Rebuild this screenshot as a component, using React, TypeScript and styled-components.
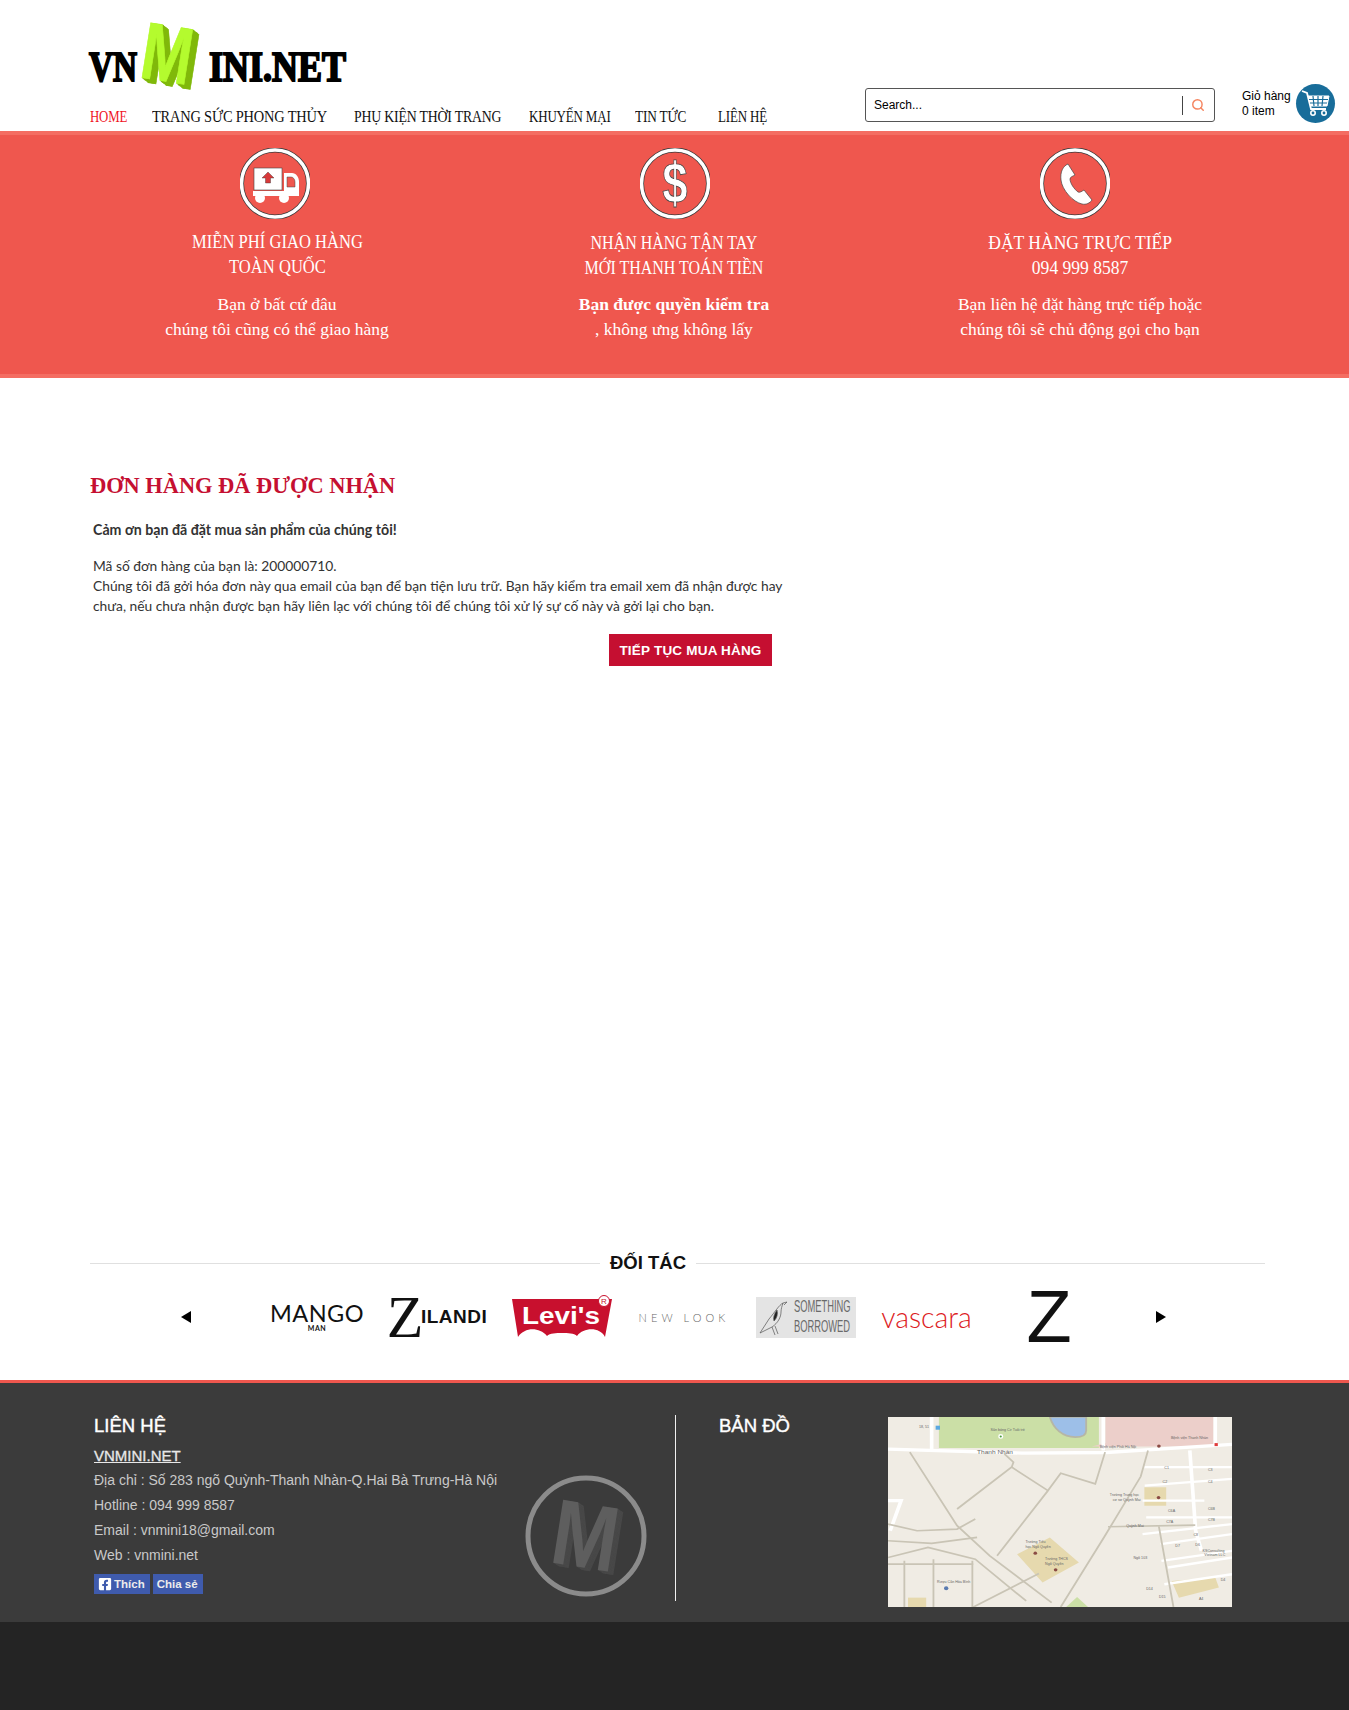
import React from 'react';
import styled, { createGlobalStyle } from 'styled-components';
import { Search } from 'lucide-react';
import { FaFacebookSquare } from 'react-icons/fa';

const GlobalStyle = createGlobalStyle`
  html, body {
    margin: 0;
    padding: 0;
    background: #fff;
    font-family: "Liberation Sans", Arial, sans-serif;
  }
  * {
    box-sizing: border-box;
  }
`;

const Page = styled.div`
  width: 1349px;
  height: 1710px;
  overflow: hidden;
`;

const Header = styled.header`
  height: 131px;
  display: flex;
  justify-content: space-between;
  align-items: flex-end;
  padding: 0 14px 8px 88px;
`;

const Brand = styled.div`
  display: flex;
  flex-direction: column;
`;

const Logo = styled.svg`
  display: block;
  width: 260px;
  height: 70px;
  overflow: visible;
`;

const Nav = styled.nav`
  display: flex;
  margin: 14px 0 -4px 2px;
  height: 20px;
  align-items: center;
`;

const NavLink = styled.a<{ $active?: boolean; $width: number; $squeeze: number }>`
  width: ${(p) => p.$width}px;
  flex: none;
  white-space: nowrap;
  font-family: "Liberation Serif", serif;
  font-size: 16px;
  letter-spacing: -0.2px;
  color: ${(p) => (p.$active ? '#f0141e' : '#111')};
  transform: scaleX(${(p) => p.$squeeze});
  transform-origin: left center;
  cursor: pointer;
`;

const HeaderRight = styled.div`
  display: flex;
  align-items: flex-end;
`;

const SearchBox = styled.div`
  width: 350px;
  height: 34px;
  margin-bottom: 1px;
  display: flex;
  align-items: center;
  border: 1px solid #555;
  border-radius: 3px;
  padding: 0 9px 0 8px;
  background: #fff;
`;

const SearchInput = styled.input`
  flex: 1;
  border: 0;
  outline: 0;
  padding: 0;
  font-family: "Liberation Sans", Arial, sans-serif;
  font-size: 12px;
  color: #000;
  &::placeholder {
    color: #000;
    opacity: 1;
  }
`;

const SearchButton = styled.div`
  height: 19px;
  width: 23px;
  display: flex;
  align-items: center;
  justify-content: flex-end;
  color: #f58560;
  border-left: 1px solid #444;
`;

const Cart = styled.div`
  display: flex;
  align-items: center;
  margin-left: 27px;
  gap: 5px;
`;

const CartText = styled.div`
  width: 49px;
  font-size: 12px;
  line-height: 15px;
  color: #000;
  white-space: nowrap;
`;

const CartBadge = styled.div`
  width: 39px;
  height: 39px;
  border-radius: 50%;
  background: #186d9a;
  display: flex;
  align-items: center;
  justify-content: center;
`;

const Banner = styled.section`
  height: 247px;
  background: #ef574e;
  border-top: 4px solid #f46d62;
  border-bottom: 4px solid #f46d62;
  padding: 13px 0 0 79px;
  display: grid;
  grid-template-columns: 396px 398px 414px;
  color: #fff;
  font-family: "Liberation Serif", serif;
  text-align: center;
`;

const Perk = styled.div`
  display: flex;
  flex-direction: column;
  align-items: center;
`;

const PerkIcon = styled.svg<{ $shift: number }>`
  display: block;
  width: 70px;
  height: 71px;
  margin-left: ${(p) => p.$shift}px;
`;

const PerkTitle = styled.div<{ $drop?: boolean; $squeeze: number }>`
  margin-top: ${(p) => (p.$drop ? 11 : 10)}px;
  font-size: 19.5px;
  line-height: 25px;
  white-space: nowrap;
  transform: scaleX(${(p) => p.$squeeze});
`;

const PerkText = styled.div<{ $drop?: boolean }>`
  margin-top: ${(p) => (p.$drop ? 12 : 13)}px;
  font-size: 17.5px;
  line-height: 25px;
  white-space: nowrap;
`;

const Main = styled.main`
  height: 874px;
  padding: 96px 0 0 90px;
`;

const OrderTitle = styled.h2`
  margin: 0;
  font-family: "Liberation Serif", serif;
  font-weight: 700;
  font-size: 22.4px;
  line-height: 24px;
  color: #c50f31;
`;

const OrderBody = styled.div`
  width: 692px;
  margin-left: 3px;
  font-family: Lato, sans-serif;
  color: #333;
`;

const Thanks = styled.p`
  margin: 22px 0 0;
  font-size: 14.2px;
  line-height: 20px;
  font-weight: 700;
`;

const Message = styled.p`
  margin: 16px 0 0;
  font-size: 13.8px;
  line-height: 20px;
  white-space: nowrap;
`;

const ContinueRow = styled.div`
  display: flex;
  justify-content: flex-end;
  width: 679px;
  margin-top: 18px;
`;

const ContinueButton = styled.button`
  width: 163px;
  height: 32px;
  border: 0;
  padding: 0;
  background: #c50f31;
  color: #fff;
  font-family: "Liberation Sans", Arial, sans-serif;
  font-weight: 700;
  font-size: 13.5px;
  letter-spacing: 0.2px;
`;

const Partners = styled.section`
  height: 128px;
`;

const PartnerHeading = styled.div`
  display: flex;
  align-items: center;
  width: 1175px;
  margin: 0 0 0 90px;
  height: 22px;
  gap: 10px;
`;

const HeadingRule = styled.div<{ $grow?: boolean }>`
  height: 1px;
  background: #e0e0e0;
  flex: ${(p) => (p.$grow ? 1 : 'none')};
  width: ${(p) => (p.$grow ? 'auto' : '510px')};
`;

const HeadingText = styled.div`
  font-weight: 700;
  font-size: 18.5px;
  color: #111;
  white-space: nowrap;
`;

const Carousel = styled.div`
  display: flex;
  align-items: center;
  height: 66px;
  margin-top: 10px;
  padding-left: 181px;
`;

const Arrow = styled.div<{ $dir: 'left' | 'right' }>`
  width: 0;
  height: 0;
  flex: none;
  border-top: 6px solid transparent;
  border-bottom: 6px solid transparent;
  border-${(p) => (p.$dir === 'left' ? 'right' : 'left')}: 10px solid #000;
`;

const LogoRow = styled.div`
  display: grid;
  grid-template-columns: repeat(7, 122px);
  margin: 0 45px 0 66px;
  width: 854px;
`;

const LogoCell = styled.div`
  height: 66px;
  display: flex;
  align-items: center;
  justify-content: center;
  overflow: visible;
`;

const Mango = styled.div`
  font-family: Lato, sans-serif;
  font-weight: 400;
  font-size: 23.5px;
  line-height: 22px;
  letter-spacing: 0.5px;
  text-align: center;
  color: #111;
  margin-left: -2px;
  & small {
    display: block;
    font-size: 7px;
    line-height: 8px;
    font-weight: 700;
    letter-spacing: 0.5px;
  }
`;

const Zilandi = styled.div`
  display: flex;
  align-items: center;
  margin-left: -6px;
  color: #111;
  font-family: "Liberation Sans", Arial, sans-serif;
  font-weight: 700;
  font-size: 19px;
  letter-spacing: 0.5px;
  & b {
    font-family: "Liberation Serif", serif;
    font-weight: 400;
    font-size: 60px;
    line-height: 58px;
    margin-right: -3px;
  }
`;

const NewLook = styled.div`
  font-family: Lato, sans-serif;
  font-weight: 300;
  font-size: 11px;
  letter-spacing: 4.1px;
  color: #666;
  white-space: nowrap;
`;

const Borrowed = styled.div`
  width: 100px;
  height: 41px;
  background: #e4e4e4;
  display: flex;
  align-items: center;
  gap: 2px;
  padding-left: 2px;
  overflow: hidden;
`;

const BirdSvg = styled.svg`
  flex: none;
  display: block;
`;

const BorrowedText = styled.div`
  width: 60px;
  flex: none;
  font-family: "Liberation Sans", Arial, sans-serif;
  font-size: 17px;
  line-height: 20px;
  color: #6a6a6a;
  text-align: left;
  transform: scaleX(0.55);
  transform-origin: left center;
  white-space: nowrap;
`;

const Vascara = styled.div`
  font-family: Lato, sans-serif;
  font-weight: 300;
  font-size: 28.5px;
  color: #dd1c24;
  margin-left: -3px;
`;

const BigZ = styled.div`
  font-family: "Liberation Sans", Arial, sans-serif;
  font-weight: 400;
  font-size: 74px;
  line-height: 66px;
  color: #111;
  margin-left: -2px;
`;

const Footer = styled.footer`
  height: 242px;
  background: #3b3b3b;
  border-top: 3px solid #ef574e;
  padding: 32px 0 0 94px;
  display: flex;
  align-items: flex-start;
`;

const ContactColumn = styled.div`
  width: 431px;
  flex: none;
  color: #c9c9c9;
  font-size: 14px;
`;

const FooterTitle = styled.h3`
  margin: 0;
  font-size: 18.5px;
  line-height: 22px;
  font-weight: 400;
  color: #fff;
  -webkit-text-stroke: 0.4px #fff;
`;

const SiteLink = styled.a`
  display: block;
  margin-top: 9px;
  font-size: 15px;
  line-height: 20px;
  color: #e8e8e8;
  -webkit-text-stroke: 0.3px #e8e8e8;
  text-decoration: underline;
`;

const ContactLine = styled.div`
  line-height: 25px;
  white-space: nowrap;
  &:first-of-type {
    margin-top: 2px;
  }
`;

const SocialRow = styled.div`
  display: flex;
  gap: 3px;
  margin-top: 6px;
`;

const SocialButton = styled.div`
  height: 20px;
  padding: 0 5px 0 4px;
  background: #3f5bad;
  color: #ececec;
  font-size: 11.5px;
  font-weight: 700;
  line-height: 20px;
  display: flex;
  align-items: center;
  gap: 2px;
`;

const Seal = styled.svg`
  flex: none;
  width: 122px;
  height: 122px;
  margin-top: 60px;
`;

const FooterDivider = styled.div`
  width: 1px;
  height: 186px;
  margin-left: 28px;
  flex: none;
  background: #f0f0f0;
`;

const MapColumn = styled.div`
  width: 169px;
  margin-left: 43px;
  flex: none;
`;

const MapImage = styled.svg`
  display: block;
  width: 344px;
  height: 190px;
  margin-top: 2px;
  flex: none;
`;

const BottomBar = styled.div`
  height: 88px;
  background: #242424;
`;

const navItems = [
  { label: 'HOME', width: 62, squeeze: 0.8, active: true },
  { label: 'TRANG SỨC PHONG THỦY', width: 202, squeeze: 0.9 },
  { label: 'PHỤ KIỆN THỜI TRANG', width: 175, squeeze: 0.86 },
  { label: 'KHUYẾN MẠI', width: 106, squeeze: 0.81 },
  { label: 'TIN TỨC', width: 83, squeeze: 0.83 },
  { label: 'LIÊN HỆ', width: 60, squeeze: 0.81 },
];

const Ring = () => (
  <>
    <circle cx="35" cy="35.5" r="33.5" fill="none" stroke="#3a3a3a" strokeWidth="5" />
    <circle cx="35" cy="35.5" r="33.5" fill="none" stroke="#fff" strokeWidth="3.5" />
  </>
);

const TruckIcon = () => (
  <PerkIcon $shift={-4} viewBox="0 0 70 71">
    <Ring />
    <rect x="14" y="20" width="28" height="22" fill="#fff" stroke="#444" strokeWidth="0.6" />
    <path d="M28 24l6 6h-3.5v5h-5v-5H22z" fill="#d8393a" stroke="#333" strokeWidth="0.4" />
    <path d="M44 25h8c4 0 7 4 7 9v10H44z" fill="#fff" />
    <path d="M47 29h4c2 0 4 2 4 5v5h-8z" fill="#ef574e" stroke="#444" strokeWidth="0.5" />
    <rect x="13" y="43" width="46" height="5" fill="#fff" />
    <circle cx="20" cy="50" r="5" fill="#fff" />
    <circle cx="44" cy="50" r="5" fill="#fff" />
  </PerkIcon>
);

const DollarIcon = () => (
  <PerkIcon $shift={2} viewBox="0 0 70 71">
    <Ring />
    <text
      transform="translate(35 55) scale(0.8 1)"
      textAnchor="middle"
      fontFamily="Liberation Sans, sans-serif"
      fontSize="57"
      fontWeight="700"
      fill="#fff"
      stroke="#444"
      strokeWidth="0.8"
    >
      $
    </text>
  </PerkIcon>
);

const PhoneIcon = () => (
  <PerkIcon $shift={-10} viewBox="0 0 70 71">
    <Ring />
    <path
      d="M28 16C23 18 20 24 21 32c1 10 12 22 21 24 4 1 8-1 10-4L44 42c-2 1-4 3-6 2-4-3-8-9-8-13 0-2 3-3 5-4z"
      fill="#fff"
      stroke="#444"
      strokeWidth="0.7"
    />
  </PerkIcon>
);

const CartIcon = () => (
  <svg width="30" height="30" viewBox="0 0 30 30" fill="none" stroke="#fff">
    <path d="M1 2l5 2 4 16h15" strokeWidth="1.8" />
    <path d="M7 7h21l-2 10H10z" fill="#fff" strokeWidth="1" />
    <path
      d="M12 7l1 10M17 7v10M22 7l-1 10M8 10.5h19M9 14h17"
      stroke="#186d9a"
      strokeWidth="1.2"
    />
    <circle cx="12" cy="24" r="2.2" strokeWidth="1.6" />
    <circle cx="23" cy="24" r="2.2" strokeWidth="1.6" />
  </svg>
);

const depth = [9, 8, 7, 6, 5, 4, 3, 2, 1];

const LogoMark = () => (
  <Logo viewBox="0 0 260 70">
    <g fontFamily="Liberation Serif, serif" fontWeight="700" fill="#000" stroke="#000" strokeWidth="2">
      <text x="1" y="58" fontSize="42" textLength="48" lengthAdjust="spacingAndGlyphs">
        VN
      </text>
      <text x="121" y="58" fontSize="42" textLength="137" lengthAdjust="spacingAndGlyphs">
        INI.NET
      </text>
    </g>
    <g fontFamily="Liberation Sans, sans-serif" fontWeight="700" fontSize="64" stroke="#80b90c" strokeWidth="0.6">
      {depth.map((d) => (
        <text
          key={d}
          transform={`translate(${50 + d * 0.7} ${54 + d * 0.55}) rotate(9) scale(0.95 1.26)`}
          fill="#80b90c"
        >
          M
        </text>
      ))}
      <text transform="translate(50 54) rotate(9) scale(0.95 1.26)" fill="#b4fb2e" stroke="#b4fb2e">
        M
      </text>
    </g>
  </Logo>
);

const LevisLogo = () => (
  <svg width="102" height="44" viewBox="0 0 102 44">
    <path
      d="M1 4h100l-7 38c-5-10-21-10-28-1-3-3-9-3-15-3s-12 0-15 3c-8-9-22-9-29 1z"
      fill="#c8102e"
    />
    <text
      x="50"
      y="29"
      textAnchor="middle"
      fontFamily="Liberation Sans, sans-serif"
      fontWeight="700"
      fontSize="24"
      fill="#fff"
      textLength="78"
      lengthAdjust="spacingAndGlyphs"
    >
      Levi's
    </text>
    <circle cx="93" cy="6" r="5.5" fill="#fff" stroke="#c8102e" />
    <text x="93" y="9" textAnchor="middle" fontFamily="Liberation Sans, sans-serif" fontSize="8" fill="#c8102e">
      R
    </text>
  </svg>
);

const BirdIcon = () => (
  <BirdSvg width="34" height="41" viewBox="0 0 34 41" fill="none" stroke="#555" strokeWidth="0.7">
    <path d="M25 6c-4 2-8 9-14 16L2 36l12-6c6-4 9-10 9-15 0-3 1-6 2-9z" />
    <path d="M25 6l4-1-3 3" />
    <path d="M19 13c-3 4-4 8-3 11 3-3 4-7 3-11z" fill="#222" />
    <path d="M14 30l3 8M17 29l3 8" />
  </BirdSvg>
);

const SealMark = () => (
  <Seal viewBox="0 0 122 122">
    <circle cx="61" cy="61" r="58" fill="none" stroke="#8b8b8b" strokeWidth="5" />
    <g fontFamily="Liberation Sans, sans-serif" fontWeight="700" fontSize="76">
      {depth.map((d) => (
        <text
          key={d}
          transform={`translate(${23 + d * 0.6} ${87 + d * 0.4}) rotate(9) scale(1.04 1.22)`}
          fill="#484848"
        >
          M
        </text>
      ))}
      <text transform="translate(23 87) rotate(9) scale(1.04 1.22)" fill="#5e5e5e">
        M
      </text>
    </g>
  </Seal>
);

const StreetMap = () => (
  <MapImage viewBox="0 0 946 568" preserveAspectRatio="none">
    <rect width="946" height="568" fill="#f0ece4" />
    <path d="M140 0h440v93H140z" fill="#cbdfa6" />
    <path d="M445 0h100v40c0 12-10 20-30 20-35 0-60-25-70-60z" fill="#9dbfe8" stroke="#b6b6a5" strokeWidth="5" />
    <path d="M598 0h297v88H560l38-10z" fill="#eccfca" />
    <path d="M705 210h60v55h-60zM355 410l90-50 80 75-100 60zM780 490l120-10 10 30-110 30z" fill="#e6d9ae" />
    <path d="M55 540h50v28H55z" fill="#e6d9ae" />
    <path d="M490 568l30-30 30 30z" fill="#cbdfa6" />
    <g fill="none" stroke="#fff" strokeWidth="10">
      <path d="M0 96l370 12 230-2 346-24" />
      <path d="M120 0v96M592 0v100M900 0v85M830 100l16 240 16 60M0 250h36l-30 90" />
      <path d="M706 205l240-20M705 150h240M700 250h170M710 300h236M700 350l246-30M750 380l196-30M752 430l194-30M770 450l176-30M760 500l186-30" strokeWidth="7" />
    </g>
    <g fill="none" stroke="#c9c4b5" strokeWidth="5">
      <path d="M60 105l130 220 90 90 170 140" />
      <path d="M190 275l150-125 100 70-140 195" />
      <path d="M320 110l25 25-5 15M440 220l35-52 95 32 27-95" />
      <path d="M0 320l80 20 110-5 50-30M0 370l120 8 125-18M0 420l110-30 130 35 140 125" />
      <path d="M0 440h235M45 430v138M125 425v143M232 430v138M235 568l180-100" />
      <path d="M475 568l120-210 100-180 20-78M605 328l240-5M745 328l40 240" />
    </g>
    <g fontFamily="Liberation Sans, sans-serif" fill="#666" fontSize="10">
      <text x="85" y="33">18, 51</text>
      <text x="282" y="42">Sân bóng Cir Tuổi trẻ</text>
      <text x="245" y="110" fontSize="18">Thanh Nhàn</text>
      <text x="582" y="92">Bệnh viện Phổi Hà Nội</text>
      <text x="778" y="66">Bệnh viện Thanh Nhàn</text>
      <text x="610" y="236">Trường Trung học</text>
      <text x="618" y="250">cơ sở Quỳnh Mai</text>
      <text x="378" y="378">Trường Tiểu</text>
      <text x="378" y="392">học Ngô Quyền</text>
      <text x="432" y="428">Trường THCS</text>
      <text x="432" y="442">Ngô Quyền</text>
      <text x="135" y="496">Rượu Cần Hòa Bình</text>
      <text x="655" y="330">Quỳnh Mai</text>
      <text x="675" y="425">Ngõ 103</text>
      <text x="760" y="156">C1</text>
      <text x="880" y="162">C3</text>
      <text x="755" y="198">C2</text>
      <text x="880" y="197">C4</text>
      <text x="770" y="284">C6A</text>
      <text x="880" y="278">C6B</text>
      <text x="765" y="318">C7A</text>
      <text x="880" y="310">C7B</text>
      <text x="840" y="356">C8</text>
      <text x="790" y="390">D7</text>
      <text x="845" y="386">D6</text>
      <text x="865" y="404">KSConsulting</text>
      <text x="870" y="416">Vietnam LLC</text>
      <text x="710" y="516">D14</text>
      <text x="745" y="542">D15</text>
      <text x="915" y="490">D4</text>
      <text x="855" y="548">A4</text>
    </g>
    <g fill="#8a4b44">
      <circle cx="405" cy="407" r="5" />
      <circle cx="461" cy="457" r="5" />
      <circle cx="744" cy="241" r="5" />
      <circle cx="745" cy="87" r="5" />
    </g>
    <circle cx="310" cy="58" r="5" fill="#4a9a3c" stroke="#fff" strokeWidth="4" />
    <rect x="898" y="78" width="9" height="9" fill="#e03b3b" />
    <rect x="131" y="26" width="12" height="12" fill="#5aa8e0" />
    <circle cx="160" cy="512" r="6" fill="#5a7bb0" />
  </MapImage>
);

const App = () => (
  <Page>
    <GlobalStyle />
    <Header>
      <Brand>
        <LogoMark />
        <Nav>
          {navItems.map((item) => (
            <NavLink key={item.label} $active={item.active} $width={item.width} $squeeze={item.squeeze}>
              {item.label}
            </NavLink>
          ))}
        </Nav>
      </Brand>
      <HeaderRight>
        <SearchBox>
          <SearchInput placeholder="Search..." readOnly />
          <SearchButton>
            <Search size={14} strokeWidth={2.5} />
          </SearchButton>
        </SearchBox>
        <Cart>
          <CartText>
            Giỏ hàng
            <br />0 item
          </CartText>
          <CartBadge>
            <CartIcon />
          </CartBadge>
        </Cart>
      </HeaderRight>
    </Header>

    <Banner>
      <Perk>
        <TruckIcon />
        <PerkTitle $squeeze={0.85}>
          MIỄN PHÍ GIAO HÀNG
          <br />
          TOÀN QUỐC
        </PerkTitle>
        <PerkText>
          Bạn ở bất cứ đâu
          <br />
          chúng tôi cũng có thể giao hàng
        </PerkText>
      </Perk>
      <Perk>
        <DollarIcon />
        <PerkTitle $drop $squeeze={0.82}>
          NHẬN HÀNG TẬN TAY
          <br />
          MỚI THANH TOÁN TIỀN
        </PerkTitle>
        <PerkText $drop>
          <strong>Bạn được quyền kiểm tra</strong>
          <br />, không ưng không lấy
        </PerkText>
      </Perk>
      <Perk>
        <PhoneIcon />
        <PerkTitle $drop $squeeze={0.9}>
          ĐẶT HÀNG TRỰC TIẾP
          <br />
          094 999 8587
        </PerkTitle>
        <PerkText $drop>
          Bạn liên hệ đặt hàng trực tiếp hoặc
          <br />
          chúng tôi sẽ chủ động gọi cho bạn
        </PerkText>
      </Perk>
    </Banner>

    <Main>
      <OrderTitle>ĐƠN HÀNG ĐÃ ĐƯỢC NHẬN</OrderTitle>
      <OrderBody>
        <Thanks>Cảm ơn bạn đã đặt mua sản phẩm của chúng tôi!</Thanks>
        <Message>
          Mã số đơn hàng của bạn là: 200000710.
          <br />
          Chúng tôi đã gởi hóa đơn này qua email của bạn để bạn tiện lưu trữ. Bạn hãy kiểm tra email xem đã nhận được hay
          <br />
          chưa, nếu chưa nhận được bạn hãy liên lạc với chúng tôi để chúng tôi xử lý sự cố này và gởi lại cho bạn.
        </Message>
        <ContinueRow>
          <ContinueButton>TIẾP TỤC MUA HÀNG</ContinueButton>
        </ContinueRow>
      </OrderBody>
    </Main>

    <Partners>
      <PartnerHeading>
        <HeadingRule />
        <HeadingText>ĐỐI TÁC</HeadingText>
        <HeadingRule $grow />
      </PartnerHeading>
      <Carousel>
        <Arrow $dir="left" />
        <LogoRow>
          <LogoCell>
            <Mango>
              MANGO
              <small>MAN</small>
            </Mango>
          </LogoCell>
          <LogoCell>
            <Zilandi>
              <b>Z</b>ILANDI
            </Zilandi>
          </LogoCell>
          <LogoCell>
            <LevisLogo />
          </LogoCell>
          <LogoCell>
            <NewLook>NEW LOOK</NewLook>
          </LogoCell>
          <LogoCell>
            <Borrowed>
              <BirdIcon />
              <BorrowedText>
                SOMETHING
                <br />
                BORROWED
              </BorrowedText>
            </Borrowed>
          </LogoCell>
          <LogoCell>
            <Vascara>vascara</Vascara>
          </LogoCell>
          <LogoCell>
            <BigZ>Z</BigZ>
          </LogoCell>
        </LogoRow>
        <Arrow $dir="right" />
      </Carousel>
    </Partners>

    <Footer>
      <ContactColumn>
        <FooterTitle>LIÊN HỆ</FooterTitle>
        <SiteLink>VNMINI.NET</SiteLink>
        <ContactLine>Địa chỉ : Số 283 ngõ Quỳnh-Thanh Nhàn-Q.Hai Bà Trưng-Hà Nội</ContactLine>
        <ContactLine>Hotline : 094 999 8587</ContactLine>
        <ContactLine>Email : vnmini18@gmail.com</ContactLine>
        <ContactLine>Web : vnmini.net</ContactLine>
        <SocialRow>
          <SocialButton>
            <FaFacebookSquare size={14} color="#fff" />
            Thích
          </SocialButton>
          <SocialButton>Chia sẻ</SocialButton>
        </SocialRow>
      </ContactColumn>
      <SealMark />
      <FooterDivider />
      <MapColumn>
        <FooterTitle>BẢN ĐỒ</FooterTitle>
      </MapColumn>
      <StreetMap />
    </Footer>
    <BottomBar />
  </Page>
);

export default App;
